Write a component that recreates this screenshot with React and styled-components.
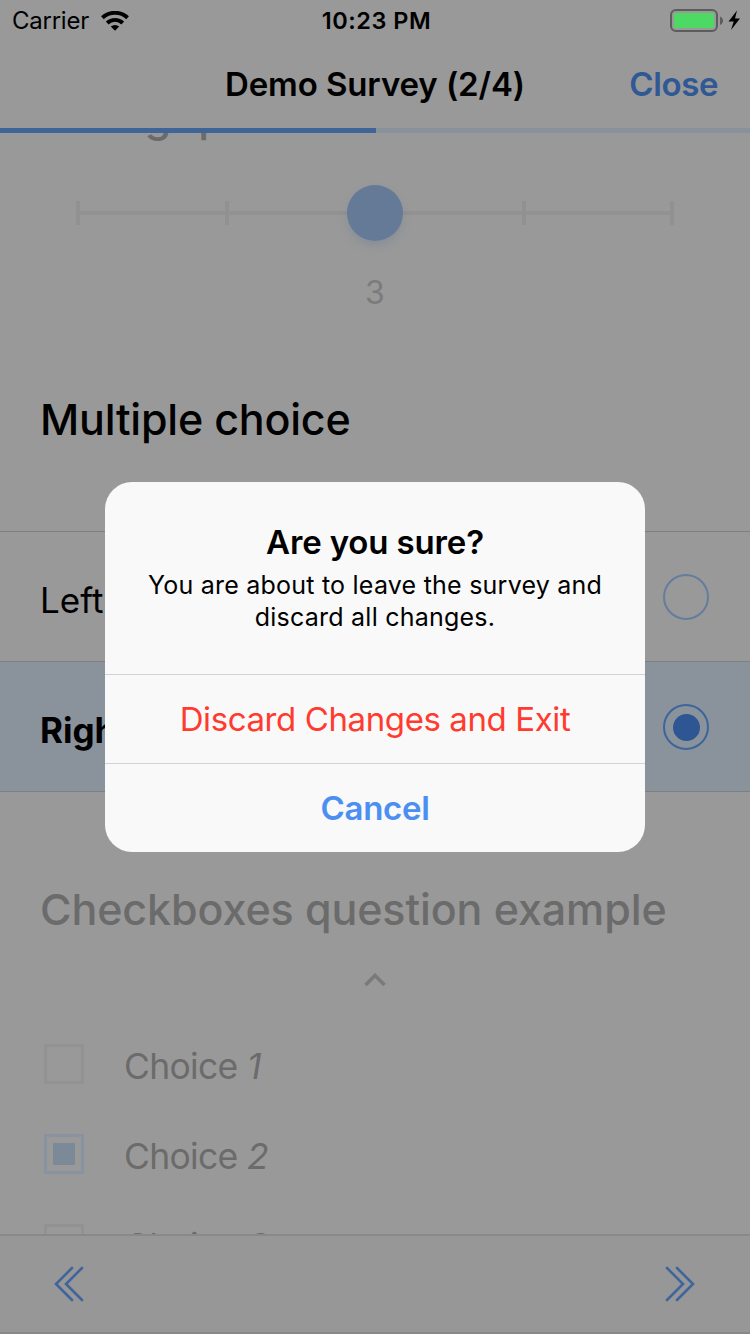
import React from 'react';
import styled, { createGlobalStyle } from 'styled-components';

const Global = createGlobalStyle`
  * { box-sizing: border-box; }
  body { margin: 0; background: #999; font-family: Inter, "Liberation Sans", sans-serif; color: #000; }
`;

const Screen = styled.div`
  position: relative;
  width: 750px;
  height: 1334px;
  display: flex;
  flex-direction: column;
  overflow: hidden;
  background: #999999;
`;

const Label = styled.span`
  display: block;
  white-space: nowrap;
  font-size: ${(p) => p.$size}px;
  line-height: ${(p) => p.$line || p.$size}px;
  font-weight: ${(p) => p.$weight || 400};
  letter-spacing: ${(p) => p.$track || 0}px;
  color: ${(p) => p.$color || '#000'};
`;

const StatusBar = styled.header`
  flex: none;
  height: 40px;
  padding: 1px 9px 0 12px;
  display: grid;
  grid-template-columns: 1fr auto 1fr;
  align-items: center;
`;

const StatusGroup = styled.div`
  display: flex;
  align-items: center;
  justify-content: ${(p) => (p.$end ? 'flex-end' : 'flex-start')};
  gap: ${(p) => p.$gap}px;
`;

const NavBar = styled.nav`
  flex: none;
  height: 88px;
  padding: 0 32px;
  display: grid;
  grid-template-columns: 1fr auto 1fr;
  align-items: center;
`;

const CloseButton = styled.button`
  justify-self: end;
  border: 0;
  padding: 0;
  background: none;
  font-family: inherit;
`;

const Progress = styled.div`
  flex: none;
  height: 5px;
  background: #89929b;
`;

const ProgressFill = styled.div`
  width: 376px;
  height: 5px;
  background: #3f6598;
`;

const Content = styled.main`
  flex: none;
  height: 1101px;
  overflow: hidden;
  display: flex;
  flex-direction: column;
`;

const ScrolledHeading = styled.div`
  flex: none;
  height: 52px;
  padding-left: 41px;
  display: flex;
  align-items: flex-start;
  & > span { margin-top: -43px; }
`;

const Scale = styled.div`
  flex: none;
  height: 56px;
  margin: 0 76px;
  display: flex;
  align-items: center;
`;

const Tick = styled.i`
  width: 4px;
  height: 24px;
  background: #919191;
`;

const Track = styled.i`
  flex: 1;
  height: 4px;
  background: #929292;
`;

const Thumb = styled.i`
  position: relative;
  width: 56px;
  height: 56px;
  margin: 0 -26px;
  border-radius: 50%;
  background: #647a97;
  box-shadow: 0 5px 9px rgba(100, 122, 151, 0.3);
`;

const ScaleValue = styled.div`
  flex: none;
  height: 120px;
  padding-top: 35px;
  display: flex;
  flex-direction: column;
  align-items: center;
`;

const QuestionTitle = styled.div`
  flex: none;
  height: ${(p) => p.$height}px;
  padding: ${(p) => p.$top}px 0 0 40px;
`;

const Option = styled.div`
  flex: none;
  height: 130px;
  padding: 0 41px 0 40px;
  display: flex;
  align-items: center;
  justify-content: space-between;
  border-top: 1px solid #7f7f7f;
  background: ${(p) => (p.$selected ? '#8a929b' : 'transparent')};
  & > ${Label} { padding-top: 6px; }
`;

const Radio = styled.span`
  width: 46px;
  height: 46px;
  margin-top: 1px;
  border-radius: 50%;
  border: 2px solid ${(p) => (p.$selected ? '#3d659c' : '#647d9c')};
  display: grid;
  place-items: center;
  &::after {
    content: '';
    width: 27px;
    height: 27px;
    border-radius: 50%;
    background: ${(p) => (p.$selected ? '#2d5693' : 'transparent')};
  }
`;

const CheckSection = styled.section`
  flex: none;
  border-top: 1px solid #7f7f7f;
  display: flex;
  flex-direction: column;
`;

const Chevron = styled.svg`
  display: block;
  margin: 0 auto 35px;
`;

const CheckRow = styled.div`
  flex: none;
  height: 90px;
  padding-left: 44px;
  display: flex;
  align-items: center;
  gap: 40px;
`;

const CheckBox = styled.span`
  width: 40px;
  height: 40px;
  margin-bottom: 6px;
  border: 3px solid ${(p) => (p.$checked ? '#8992a0' : '#929292')};
  display: grid;
  place-items: center;
  &::after {
    content: '';
    width: 22px;
    height: 22px;
    background: ${(p) => (p.$checked ? '#7c8999' : 'transparent')};
  }
`;

const Toolbar = styled.footer`
  flex: none;
  height: 100px;
  padding: 0 55px 0 54px;
  display: flex;
  align-items: center;
  justify-content: space-between;
  border-top: 2px solid #898989;
  border-bottom: 2px solid #888888;
  background: #979797;
`;

const Overlay = styled.div`
  position: absolute;
  inset: 0;
  display: grid;
  place-items: center;
`;

const Dialog = styled.div`
  width: 540px;
  height: 370px;
  border-radius: 27px;
  background: #f9f9f9;
  overflow: hidden;
  display: flex;
  flex-direction: column;
`;

const DialogBody = styled.div`
  height: 192px;
  padding-top: 40px;
  display: flex;
  flex-direction: column;
  align-items: center;
`;

const DialogMessage = styled.div`
  margin-top: 7px;
  display: flex;
  flex-direction: column;
  align-items: center;
`;

const DialogButton = styled.button`
  height: 89px;
  padding: 0;
  border: 0;
  border-top: 1px solid #d3d3d5;
  background: none;
  font-family: inherit;
  display: grid;
  place-items: center;
`;

const Arrows = ({ flip }) => (
  <svg width="30" height="36" viewBox="0 0 30 36" fill="none" stroke="#3f659c" strokeWidth="2.6" strokeLinecap="round">
    <g transform={flip ? 'translate(30 0) scale(-1 1)' : undefined}>
      <path d="M18 2 2 18l16 16M28 2 12 18l16 16" />
    </g>
  </svg>
);

const Wifi = () => (
  <svg width="28" height="20" viewBox="0 0 28 20" fill="none" stroke="#000" strokeWidth="3.9">
    <path d="M1.4 6.7a18.5 18.5 0 0 1 25.2 0" />
    <path d="M6.2 12a11.3 11.3 0 0 1 15.6 0" />
    <path d="M14 19.8 9.8 15.6a6.1 6.1 0 0 1 8.4 0z" fill="#000" stroke="none" />
  </svg>
);

const Battery = () => (
  <svg width="71" height="24" viewBox="0 0 71 24">
    <rect x="1" y="1" width="46" height="21" rx="5" fill="none" stroke="#5c5c5c" strokeWidth="2" />
    <rect x="4" y="4" width="40" height="15" rx="1.5" fill="#4cd964" />
    <path d="M50 7.5c4 1.5 4 7 0 8.5z" fill="#5c5c5c" />
    <path d="M67 1.5 58.5 12.5h5.2l-2.7 8.5L70 9.5h-5z" fill="#000" />
  </svg>
);

export default function App() {
  return (
    <Screen>
      <Global />
      <StatusBar>
        <StatusGroup $gap={12}>
          <Label $size={24} $line={30} $track={-0.25}>Carrier</Label>
          <Wifi />
        </StatusGroup>
        <Label $size={23.5} $line={30} $weight={600} $track={0.5}>10:23 PM</Label>
        <StatusGroup $end $gap={0}><Battery /></StatusGroup>
      </StatusBar>
      <NavBar>
        <span />
        <Label $size={33} $line={40} $weight={600} $track={-0.1}>Demo Survey (2/4)</Label>
        <CloseButton><Label $size={33} $line={40} $weight={600} $track={-0.4} $color="#2f5894">Close</Label></CloseButton>
      </NavBar>
      <Progress><ProgressFill /></Progress>
      <Content>
        <ScrolledHeading>
          <Label $size={43} $line={52} $weight={500} $color="#6b6b6b">Rating question</Label>
        </ScrolledHeading>
        <Scale>
          <Tick /><Track /><Tick /><Track /><Thumb /><Track /><Tick /><Track /><Tick />
        </Scale>
        <ScaleValue>
          <Label $size={32} $line={34} $color="#7b7b7b">3</Label>
        </ScaleValue>
        <QuestionTitle $height={170} $top={32}>
          <Label $size={43} $line={52} $weight={500} $track={-0.22}>Multiple choice</Label>
        </QuestionTitle>
        <Option>
          <Label $size={35} $line={42}>Left</Label>
          <Radio />
        </Option>
        <Option $selected>
          <Label $size={35} $line={42} $weight={700}>Right</Label>
          <Radio $selected />
        </Option>
        <CheckSection>
          <QuestionTitle $height={181} $top={91}>
            <Label $size={43} $line={52} $weight={500} $track={-0.1} $color="#6b6b6b">Checkboxes question example</Label>
          </QuestionTitle>
          <Chevron width="22" height="14" viewBox="0 0 22 14" fill="none" stroke="#7a7a7a" strokeWidth="3.6">
            <path d="M1.5 12 11 2.5 20.5 12" />
          </Chevron>
          <CheckRow><CheckBox /><Label $size={35.5} $line={42} $track={-0.7} $color="#6b6b6b">Choice <i>1</i></Label></CheckRow>
          <CheckRow><CheckBox $checked /><Label $size={35.5} $line={42} $track={-0.7} $color="#6b6b6b">Choice <i>2</i></Label></CheckRow>
          <CheckRow><CheckBox /><Label $size={35.5} $line={42} $track={-0.7} $color="#6b6b6b">Choice <i>3</i></Label></CheckRow>
        </CheckSection>
      </Content>
      <Toolbar><Arrows /><Arrows flip /></Toolbar>
      <Overlay>
        <Dialog>
          <DialogBody>
            <Label $size={33} $line={40} $weight={600} $track={-0.15}>Are you sure?</Label>
            <DialogMessage>
              <Label $size={25} $line={32} $track={0.23}>You are about to leave the survey and</Label>
              <Label $size={25} $line={32} $track={0.23}>discard all changes.</Label>
            </DialogMessage>
          </DialogBody>
          <DialogButton><Label $size={33} $line={40} $track={-0.4} $color="#ff3b30">Discard Changes and Exit</Label></DialogButton>
          <DialogButton><Label $size={33} $line={40} $weight={600} $track={-0.3} $color="#4b8ff2">Cancel</Label></DialogButton>
        </Dialog>
      </Overlay>
    </Screen>
  );
}
